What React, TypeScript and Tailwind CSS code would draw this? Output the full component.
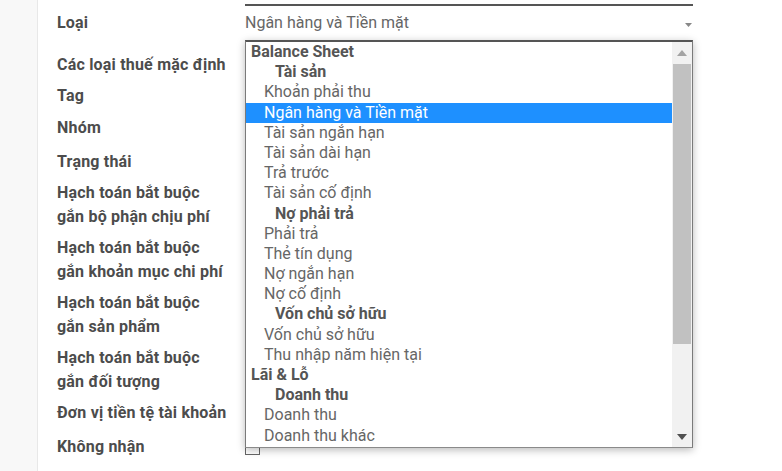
import React from "react";

type Kind = "group" | "sub" | "opt";
type Opt = { text: string; kind: Kind; active?: boolean };

const options: Opt[] = [
  { text: "Balance Sheet", kind: "group" },
  { text: "Tài sản", kind: "sub" },
  { text: "Khoản phải thu", kind: "opt" },
  { text: "Ngân hàng và Tiền mặt", kind: "opt", active: true },
  { text: "Tài sản ngắn hạn", kind: "opt" },
  { text: "Tài sản dài hạn", kind: "opt" },
  { text: "Trả trước", kind: "opt" },
  { text: "Tài sản cố định", kind: "opt" },
  { text: "Nợ phải trả", kind: "sub" },
  { text: "Phải trả", kind: "opt" },
  { text: "Thẻ tín dụng", kind: "opt" },
  { text: "Nợ ngắn hạn", kind: "opt" },
  { text: "Nợ cố định", kind: "opt" },
  { text: "Vốn chủ sở hữu", kind: "sub" },
  { text: "Vốn chủ sở hữu", kind: "opt" },
  { text: "Thu nhập năm hiện tại", kind: "opt" },
  { text: "Lãi & Lỗ", kind: "group" },
  { text: "Doanh thu", kind: "sub" },
  { text: "Doanh thu", kind: "opt" },
  { text: "Doanh thu khác", kind: "opt" },
];

const kindClass: Record<Kind, string> = {
  group: "pl-[5px] font-bold text-[#555]",
  sub: "pl-[29px] font-bold text-[#555]",
  opt: "pl-[18px] text-[#666]",
};

const labels: { lines: string[]; mt: string }[] = [
  { lines: ["Các loại thuế mặc định"], mt: "mt-[18px]" },
  { lines: ["Tag"], mt: "mt-[7px]" },
  { lines: ["Nhóm"], mt: "mt-[8px]" },
  { lines: ["Trạng thái"], mt: "mt-[10px]" },
  { lines: ["Hạch toán bắt buộc", "gắn bộ phận chịu phí"], mt: "mt-[7px]" },
  { lines: ["Hạch toán bắt buộc", "gắn khoản mục chi phí"], mt: "mt-[7px]" },
  { lines: ["Hạch toán bắt buộc", "gắn sản phẩm"], mt: "mt-[7px]" },
  { lines: ["Hạch toán bắt buộc", "gắn đối tượng"], mt: "mt-[7px]" },
  { lines: ["Đơn vị tiền tệ tài khoản"], mt: "mt-[7px]" },
  { lines: ["Không nhận"], mt: "mt-[10px]" },
];

function Dropdown() {
  return (
    <div className="absolute left-[245px] top-[40px] flex h-[408px] w-[448px] border-x border-b border-t-2 border-x-[#7a7a7a] border-b-[#8a8a8a] border-t-[#555] bg-white shadow-[0_2px_8px_rgba(0,0,0,0.28)]">
      <ul className="flex-1 overflow-hidden">
        {options.map((o, i) => (
          <li
            key={i}
            className={
              "block h-[20.2px] whitespace-nowrap text-[16px] leading-[20.2px] " +
              kindClass[o.kind] +
              (o.active ? " bg-[#1e90ff] !text-white" : "")
            }
          >
            {o.text}
          </li>
        ))}
      </ul>
      <div className="flex w-[20px] flex-col bg-[#f1f1f1]">
        <div className="flex h-[22px] items-center justify-center">
          <svg width="10" height="6" viewBox="0 0 10 6">
            <path d="M5 0L10 6H0z" fill="#a3a3a3" />
          </svg>
        </div>
        <div className="mx-[1px] h-[280px] bg-[#c1c1c1]" />
        <div className="flex flex-1 items-end justify-center pb-[7px]">
          <svg width="10" height="6" viewBox="0 0 10 6">
            <path d="M0 0H10L5 6z" fill="#505050" />
          </svg>
        </div>
      </div>
    </div>
  );
}

export default function App() {
  return (
    <div
      className="relative flex h-[471px] w-[782px] overflow-hidden bg-white"
      style={{ fontFamily: "Roboto, 'Noto Sans', sans-serif" }}
    >
      <div className="w-[38px] shrink-0 border-r border-[#e8e8e8] bg-[#f8f8f8]" />
      <div className="flex flex-1">
        <div className="ml-[19px] w-[188px] shrink-0 pt-[11px] text-[16px] font-bold leading-6 tracking-[0.2px] text-[#4c4c4c]">
          <div>Loại</div>
          {labels.map((l, i) => (
            <div key={i} className={l.mt}>
              {l.lines.map((t) => (
                <div key={t} className="whitespace-nowrap">{t}</div>
              ))}
            </div>
          ))}
        </div>
        <div className="w-[448px] shrink-0">
          <div className="mt-[4px] h-[2px] bg-[#555]" />
          <div className="flex h-[35px] items-center justify-between pb-[2px] text-[16px] text-[#666]">
            <span className="mt-[1px]">Ngân hàng và Tiền mặt</span>
            <svg width="7" height="4" viewBox="0 0 7 4" className="mr-[1px] mt-[5px]">
              <path d="M0 0H7L3.5 4z" fill="#888" />
            </svg>
          </div>
          <div className="mt-[399px] h-[15px] w-[15px] border border-[#666] bg-white" />
        </div>
      </div>
      <Dropdown />
    </div>
  );
}
